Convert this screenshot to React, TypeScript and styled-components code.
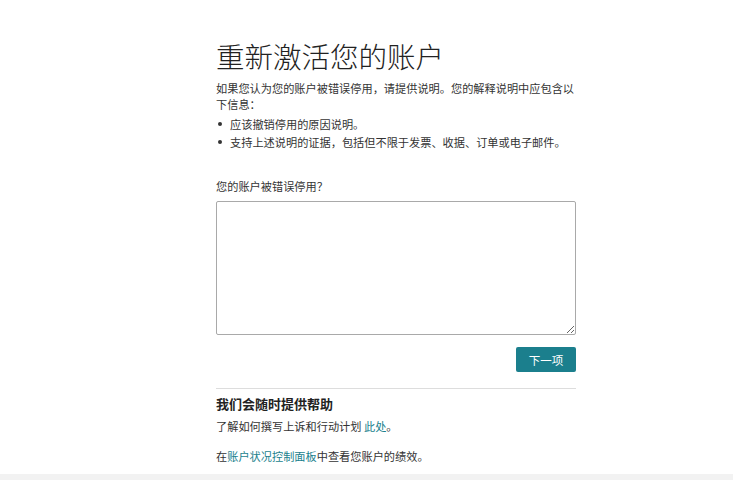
import React from "react";
import styled, { createGlobalStyle } from "styled-components";

const Global = createGlobalStyle`
  html, body { margin: 0; padding: 0; background: #fff; }
  body { font-family: "Noto Sans CJK SC", "Noto Sans", sans-serif; color: #333; }
`;

const Page = styled.div`
  min-height: 480px;
  display: flex;
  flex-direction: column;
`;

const Main = styled.main`
  width: 360px;
  margin-left: 216px;
  padding-top: 36px;
  flex: 1;
`;

const Title = styled.h1`
  margin: 0;
  font-size: 28.5px;
  font-weight: 300;
  line-height: 40px;
  color: #222;
`;

const Para = styled.p`
  margin: 4px 0 0;
  font-size: 11.2px;
  line-height: 16px;
  color: #333;
`;

const List = styled.ul`
  margin: 3px 0 0;
  padding: 0;
  list-style: none;
`;

const Item = styled.li`
  position: relative;
  padding-left: 14px;
  font-size: 11.2px;
  line-height: 18px;
  color: #333;
  &::before {
    content: "";
    position: absolute;
    left: 2px;
    top: 7px;
    width: 4px;
    height: 4px;
    border-radius: 50%;
    background: #333;
  }
`;

const Label = styled.label`
  display: block;
  margin-top: 27px;
  font-size: 11.2px;
  line-height: 16px;
  color: #333;
`;

const Area = styled.textarea`
  display: block;
  box-sizing: border-box;
  margin-top: 7px;
  width: 360px;
  height: 134px;
  border: 1px solid #a9a9a9;
  border-radius: 2px;
  resize: vertical;
  font-family: inherit;
`;

const Actions = styled.div`
  display: flex;
  justify-content: flex-end;
  margin-top: 12px;
`;

const Button = styled.button`
  height: 25px;
  width: 60px;
  border: none;
  border-radius: 2px;
  background: #1b7f8d;
  color: #fff;
  font-family: inherit;
  font-size: 11.5px;
  padding: 0;
`;

const Divider = styled.hr`
  margin: 16px 0 0;
  border: none;
  border-top: 1px solid #ddd;
`;

const Heading = styled.h2`
  margin: 6px 0 0;
  font-size: 13px;
  font-weight: 700;
  line-height: 18px;
  color: #222;
`;

const Text = styled.p<{ $gap: number }>`
  margin: ${(p) => p.$gap}px 0 0;
  font-size: 11.2px;
  line-height: 16px;
  color: #333;
`;

const Link = styled.a`
  color: #1b7f8d;
  text-decoration: none;
`;

const Footer = styled.div`
  height: 6px;
  background: #f2f2f2;
`;

export default function App() {
  return (
    <Page>
      <Global />
      <Main>
        <Title>重新激活您的账户</Title>
        <Para>如果您认为您的账户被错误停用，请提供说明。您的解释说明中应包含以下信息：</Para>
        <List>
          <Item>应该撤销停用的原因说明。</Item>
          <Item>支持上述说明的证据，包括但不限于发票、收据、订单或电子邮件。</Item>
        </List>
        <Label htmlFor="reason">您的账户被错误停用？</Label>
        <Area id="reason" />
        <Actions>
          <Button>下一项</Button>
        </Actions>
        <Divider />
        <Heading>我们会随时提供帮助</Heading>
        <Text $gap={5}>
          了解如何撰写上诉和行动计划 <Link href="#">此处</Link>。
        </Text>
        <Text $gap={14}>
          在<Link href="#">账户状况控制面板</Link>中查看您账户的绩效。
        </Text>
      </Main>
      <Footer />
    </Page>
  );
}
